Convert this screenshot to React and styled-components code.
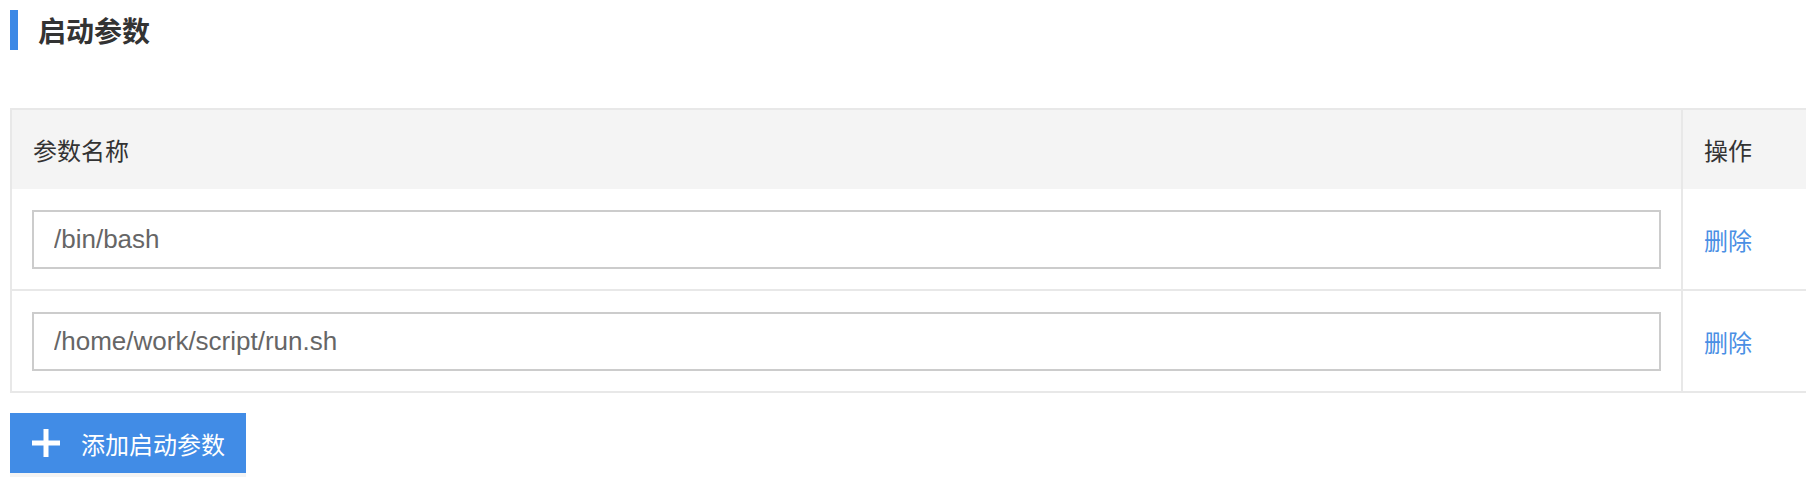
import React, { useState } from "react";
import styled, { createGlobalStyle } from "styled-components";

const GlobalStyle = createGlobalStyle`
  html, body {
    margin: 0;
    padding: 0;
    background: #fff;
    overflow: hidden;
  }
  body {
    font-family: "Liberation Sans", "Noto Sans CJK SC", sans-serif;
  }
`;

const Page = styled.div`
  padding: 10px;
  width: 1820px;
  box-sizing: border-box;
`;

const SectionHead = styled.div`
  display: flex;
  align-items: center;
  height: 40px;
  gap: 20px;
`;

const Accent = styled.span`
  width: 8px;
  height: 40px;
  background: #3d89e6;
`;

const Title = styled.h2`
  margin: 0;
  font-size: 28px;
  font-weight: 700;
  color: #333;
  line-height: 40px;
  font-family: "Noto Sans CJK SC", sans-serif;
`;

const Table = styled.div`
  margin-top: 58px;
  width: 1820px;
  box-sizing: border-box;
  border: 2px solid #e8e8e8;
  display: grid;
  grid-template-columns: 1fr 147px;
`;

const HeadCell = styled.div`
  height: 79px;
  background: #f4f4f4;
  display: flex;
  align-items: center;
  padding-left: 21px;
  font-size: 24px;
  color: #333;
  font-family: "Noto Sans CJK SC", sans-serif;
  border-left: ${(p) => (p.side ? "2px solid #e8e8e8" : "none")};
`;

const Cell = styled.div`
  padding: 21px 20px 20px;
  display: flex;
  align-items: center;
  border-top: ${(p) => (p.first ? "none" : "2px solid #e8e8e8")};
  border-left: ${(p) => (p.side ? "2px solid #e8e8e8" : "none")};
  padding-left: ${(p) => (p.side ? "21px" : "20px")};
`;

const Input = styled.input`
  width: 100%;
  height: 59px;
  box-sizing: border-box;
  border: 2px solid #cccccc;
  border-radius: 0;
  padding: 0 20px;
  font-size: 26px;
  color: #666;
  font-family: "Liberation Sans", "Noto Sans CJK SC", sans-serif;
  outline: none;
`;

const DeleteLink = styled.a`
  font-size: 24px;
  color: #4a8fe4;
  cursor: pointer;
  font-family: "Noto Sans CJK SC", sans-serif;
`;

const AddButton = styled.button`
  margin-top: 20px;
  width: 236px;
  height: 60px;
  border: none;
  border-radius: 0;
  background: #418ce6;
  color: #fff;
  display: flex;
  align-items: center;
  gap: 21px;
  padding: 0 0 0 22px;
  font-size: 24px;
  font-family: "Noto Sans CJK SC", sans-serif;
  box-shadow: 0 4px 0 #f4f4f4;
  cursor: pointer;
`;

const Plus = () => (
  <svg width="28" height="28" viewBox="0 0 28 28">
    <rect x="11.5" y="0" width="5" height="28" fill="#fff" />
    <rect x="0" y="11.5" width="28" height="5" fill="#fff" />
  </svg>
);

export default function App() {
  const [params, setParams] = useState(["/bin/bash", "/home/work/script/run.sh"]);

  return (
    <Page>
      <GlobalStyle />
      <SectionHead>
        <Accent />
        <Title>启动参数</Title>
      </SectionHead>
      <Table>
        <HeadCell>参数名称</HeadCell>
        <HeadCell side>操作</HeadCell>
        {params.map((v, i) => (
          <React.Fragment key={i}>
            <Cell first={i === 0}>
              <Input
                value={v}
                onChange={(e) =>
                  setParams((p) => p.map((x, j) => (j === i ? e.target.value : x)))
                }
              />
            </Cell>
            <Cell first={i === 0} side>
              <DeleteLink onClick={() => setParams((p) => p.filter((_, j) => j !== i))}>
                删除
              </DeleteLink>
            </Cell>
          </React.Fragment>
        ))}
      </Table>
      <AddButton onClick={() => setParams((p) => [...p, ""])}>
        <Plus />
        添加启动参数
      </AddButton>
    </Page>
  );
}
